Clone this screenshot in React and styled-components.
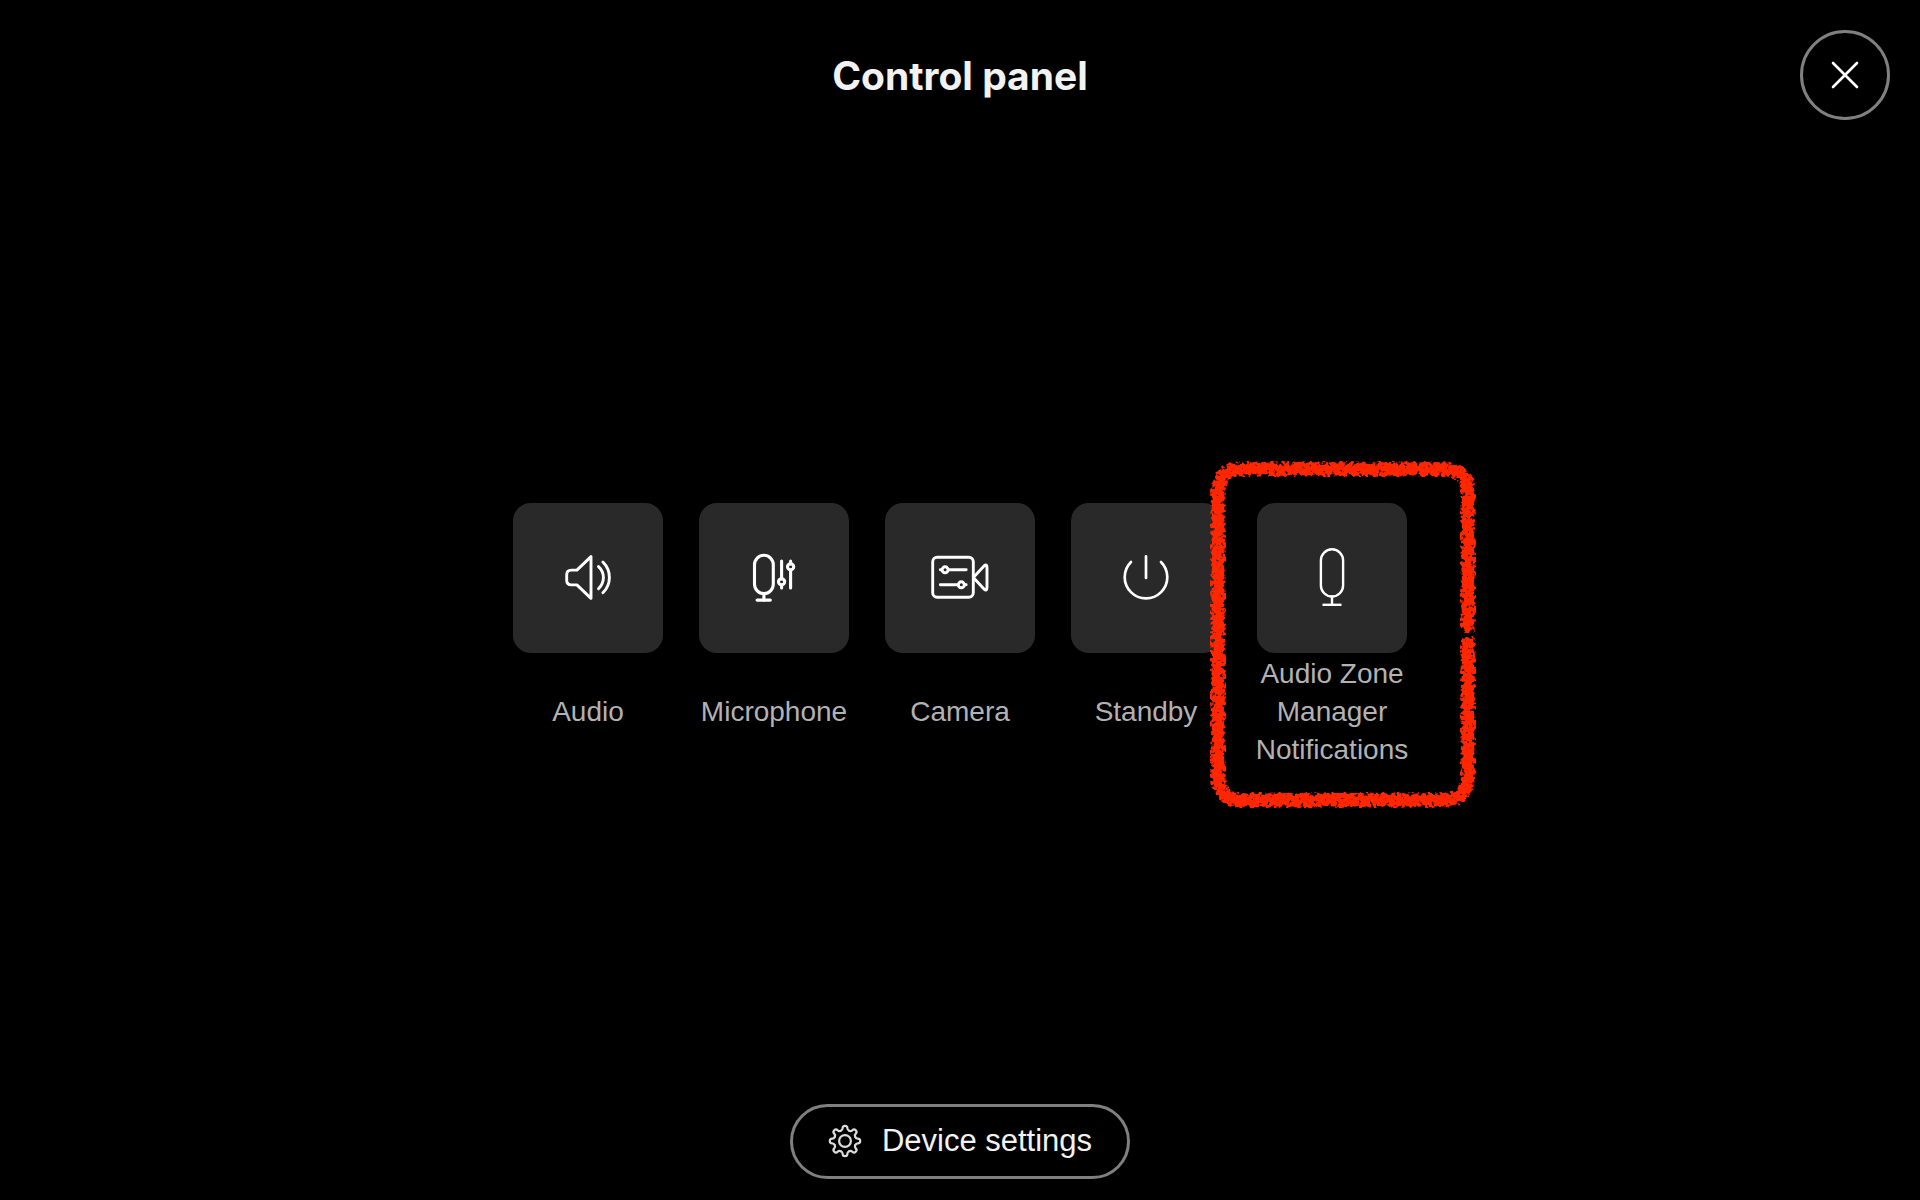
import React from "react";
import styled, { createGlobalStyle } from "styled-components";

const GlobalStyle = createGlobalStyle`
  *, *::before, *::after { box-sizing: border-box; }
  body {
    margin: 0;
    background: #000;
    color: #f2f2f2;
    font-family: "Liberation Sans", Arial, sans-serif;
  }
  button { font: inherit; color: inherit; cursor: pointer; }
`;

const Page = styled.div`
  display: flex;
  flex-direction: column;
  min-height: 100vh;
`;

const Header = styled.header`
  display: grid;
  grid-template-columns: 1fr auto 1fr;
  align-items: center;
  padding: 30px 30px 48px;
`;

const Title = styled.h1`
  grid-column: 2;
  margin: 0;
  padding-top: 2px;
  font-family: Inter, "Liberation Sans", sans-serif;
  font-size: 39px;
  line-height: 48px;
  font-weight: 700;
`;

const CloseButton = styled.button`
  grid-column: 3;
  justify-self: end;
  display: grid;
  place-items: center;
  width: 90px;
  height: 90px;
  padding: 0;
  border: 3px solid #808080;
  border-radius: 50%;
  background: transparent;
`;

const Main = styled.main`
  flex: 1;
  display: flex;
  align-items: center;
  justify-content: center;
`;

const Actions = styled.ul`
  display: flex;
  margin: 0;
  padding: 0;
  list-style: none;
`;

const Action = styled.li`
  position: relative;
  width: 186px;
`;

const ActionButton = styled.button`
  display: flex;
  flex-direction: column;
  align-items: center;
  width: 100%;
  padding: 0;
  border: 0;
  background: transparent;
`;

const Tile = styled.span`
  display: grid;
  place-items: center;
  width: 150px;
  height: 150px;
  border-radius: 18px;
  background: #292929;
`;

const Label = styled.span`
  display: flex;
  align-items: center;
  justify-content: center;
  min-height: 116px;
  padding-top: 2px;
  font-size: 28px;
  line-height: 38px;
  text-align: center;
  color: #b2b2b2;
`;

const Footer = styled.footer`
  display: flex;
  justify-content: center;
  padding-bottom: 21px;
`;

const SettingsButton = styled.button`
  display: flex;
  align-items: center;
  gap: 20px;
  height: 75px;
  padding: 0 35px 2px;
  border: 3px solid #808080;
  border-radius: 38px;
  background: transparent;
  font-size: 31px;
  line-height: 38px;
`;

const Marker = styled.svg`
  position: absolute;
  left: -38px;
  top: -52px;
  width: 286px;
  height: 366px;
  pointer-events: none;
`;

const Glyph = ({ size = 60, width = 2.7, children }) => (
  <svg
    width={size}
    height={size}
    viewBox={`0 0 ${size} ${size}`}
    fill="none"
    stroke="#fff"
    strokeWidth={width}
    strokeLinecap="round"
    strokeLinejoin="round"
    aria-hidden="true"
  >
    {children}
  </svg>
);

const AudioIcon = () => (
  <Glyph width={2.9}>
    <path d="M33 8.6V50.4L18.9 36.9H13.3Q8.7 36.9 8.7 32.3V26.7Q8.7 22.1 13.3 22.1H18.9Z" />
    <path d="M40.5 18.6Q45.4 23.1 45.4 29.5T40.5 40.8" />
    <path d="M44.9 14Q51.4 20.4 51.4 29.5T44.9 44.8" />
  </Glyph>
);

const MicrophoneIcon = () => (
  <Glyph width={3.1}>
    <rect x="10.5" y="7.3" width="18.8" height="38.3" rx="9.4" />
    <path d="M19.9 46V52" />
    <path d="M13.2 52.1H26.2" strokeWidth="3.4" />
    <path d="M37.6 13V31M37.6 37V40M46.6 13V16M46.6 22V40" />
    <circle cx="37.6" cy="33.8" r="3.1" />
    <circle cx="46.6" cy="18.8" r="3.1" />
  </Glyph>
);

const CameraIcon = () => (
  <Glyph width={2.9}>
    <rect x="2.7" y="9.2" width="40.6" height="40" rx="4.5" />
    <path d="M10.3 21.8H12M18.2 21.8H36.2M10.3 36.8H28.2M34.4 36.8H36.2" />
    <circle cx="15.1" cy="21.8" r="3" />
    <circle cx="31.3" cy="36.8" r="3" />
    <path d="M44.5 28.2L54 18Q57 15.6 57 19.4V39.6Q57 43.4 54 41L44.5 30.8" />
  </Glyph>
);

const PowerIcon = () => (
  <Glyph>
    <path d="M30 8.4V30" />
    <path d="M15 14A21.3 21.3 0 1 0 45 14" />
  </Glyph>
);

const ZoneIcon = () => (
  <Glyph width={2.4}>
    <rect x="18.9" y="1.3" width="22.2" height="47.2" rx="11.1" />
    <path d="M30 48.5V56.5" />
    <path d="M20.5 56.8H39.5" strokeLinecap="butt" />
  </Glyph>
);

const CloseIcon = () => (
  <Glyph size={30} width={2.6}>
    <path d="M3 3L27 27M27 3L3 27" />
  </Glyph>
);

const GEAR_ANGLES = [0, 45, 90, 135, 180, 225, 270, 315];

const GearIcon = () => (
  <svg
    width="34"
    height="34"
    viewBox="0 0 34 34"
    fill="none"
    stroke="#dcdcdc"
    strokeWidth="2.2"
    strokeLinecap="round"
    strokeLinejoin="round"
    aria-hidden="true"
  >
    <circle cx="17" cy="17" r="5.9" />
    {GEAR_ANGLES.map((angle) => (
      <path
        key={angle}
        transform={`rotate(${angle} 17 17)`}
        d="M12.8 6.8C14.1 6.3 14.6 5.4 14.6 4.2A2.4 2.4 0 0 1 19.4 4.2C19.4 5.4 19.9 6.3 21.2 6.8"
      />
    ))}
  </svg>
);

const Highlight = () => (
  <Marker viewBox="0 0 286 366" aria-hidden="true">
    <defs>
      <filter
        id="crayon"
        filterUnits="userSpaceOnUse"
        x="0"
        y="0"
        width="286"
        height="366"
        colorInterpolationFilters="sRGB"
      >
        <feTurbulence type="fractalNoise" baseFrequency="0.26" numOctaves="2" seed="7" result="noise" />
        <feColorMatrix
          in="noise"
          type="matrix"
          values="0 0 0 0 0  0 0 0 0 0  0 0 0 0 0  1 0 0 0 0"
          result="grain"
        />
        <feGaussianBlur in="SourceAlpha" stdDeviation="2.4" result="soft" />
        <feComposite in="soft" in2="grain" operator="arithmetic" k2="1" k3="1.7" k4="-0.85" result="mixed" />
        <feComponentTransfer in="mixed" result="edge">
          <feFuncA type="linear" slope="4" intercept="-1.7" />
        </feComponentTransfer>
        <feMorphology in="SourceAlpha" operator="dilate" radius="1" result="reach" />
        <feFlood floodColor="#ff2600" />
        <feComposite in2="edge" operator="in" />
        <feComposite in2="reach" operator="in" />
      </filter>
    </defs>
    <g filter="url(#crayon)">
      <path
        d="M267 181V42Q267 18 243 18H41Q17 18 17 42V325Q17 349 41 349H243Q267 349 267 325V186"
        fill="none"
        stroke="#ff2600"
        strokeWidth="14"
      />
    </g>
  </Marker>
);

const ACTIONS = [
  { label: "Audio", Icon: AudioIcon },
  { label: "Microphone", Icon: MicrophoneIcon },
  { label: "Camera", Icon: CameraIcon },
  { label: "Standby", Icon: PowerIcon },
  { label: "Audio Zone Manager Notifications", Icon: ZoneIcon, highlighted: true },
];

export default function App() {
  return (
    <Page>
      <GlobalStyle />
      <Header>
        <Title>Control panel</Title>
        <CloseButton type="button" aria-label="Close">
          <CloseIcon />
        </CloseButton>
      </Header>
      <Main>
        <Actions>
          {ACTIONS.map(({ label, Icon, highlighted }) => (
            <Action key={label}>
              <ActionButton type="button">
                <Tile>
                  <Icon />
                </Tile>
                <Label>{label}</Label>
              </ActionButton>
              {highlighted && <Highlight />}
            </Action>
          ))}
        </Actions>
      </Main>
      <Footer>
        <SettingsButton type="button">
          <GearIcon />
          Device settings
        </SettingsButton>
      </Footer>
    </Page>
  );
}
